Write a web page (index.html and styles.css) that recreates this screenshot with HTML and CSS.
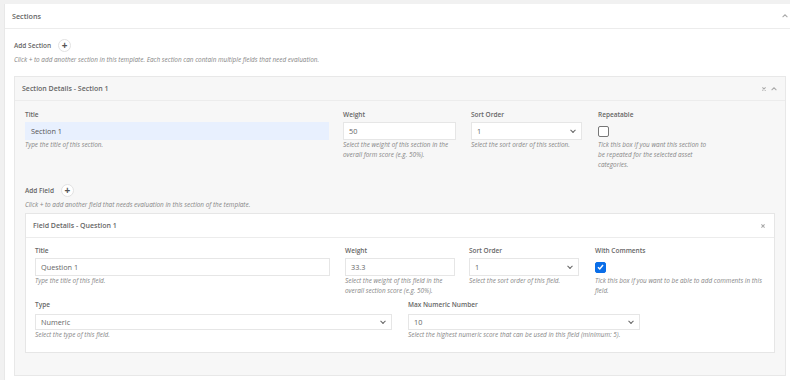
FILE: index.html
```html
<!doctype html>
<html lang="en">
<head>
<meta charset="utf-8">
<title>Sections</title>
<link rel="stylesheet" href="styles.css">
</head>
<body>

<div class="card">
	<div class="card-head">
		<span>Sections</span>
		<span class="tools">
			<svg class="ico" viewBox="0 0 10 10"><path d="M2 6.5 5 3.5 8 6.5" /></svg>
		</span>
	</div>

	<div class="card-body">

		<div class="add-row">
			<span class="add-label">Add Section</span>
			<span class="add-btn">+</span>
		</div>
		<p class="help">Click + to add another section in this template. Each section can contain multiple fields that need evaluation.</p>

		<!-- section panel -->
		<div class="panel">
			<div class="panel-head">
				<span>Section Details - Section 1</span>
				<span class="tools">
					<svg class="ico" viewBox="0 0 10 10"><path d="M3 3 7 7 M7 3 3 7" /></svg>
					<svg class="ico" viewBox="0 0 10 10"><path d="M2 6.5 5 3.5 8 6.5" /></svg>
				</span>
			</div>

			<div class="panel-body">
				<div class="row sec-row">
					<div class="col">
						<label>Title</label>
						<div class="input filled">Section 1</div>
						<p class="help">Type the title of this section.</p>
					</div>
					<div class="col">
						<label>Weight</label>
						<div class="input">50</div>
						<p class="help">Select the weight of this section in the overall form score (e.g. 50%).</p>
					</div>
					<div class="col">
						<label>Sort Order</label>
						<div class="input select">1</div>
						<p class="help">Select the sort order of this section.</p>
					</div>
					<div class="col">
						<label>Repeatable</label>
						<div class="check-wrap"><span class="check"></span></div>
						<p class="help">Tick this box if you want this section to be repeated for the selected asset categories.</p>
					</div>
				</div>

				<div class="add-row field-add">
					<span class="add-label">Add Field</span>
					<span class="add-btn">+</span>
				</div>
				<p class="help">Click + to add another field that needs evaluation in this section of the template.</p>

				<!-- field card -->
				<div class="field">
					<div class="field-head">
						<span>Field Details - Question 1</span>
						<span class="tools">
							<svg class="ico" viewBox="0 0 10 10"><path d="M3 3 7 7 M7 3 3 7" /></svg>
						</span>
					</div>
					<div class="field-body">
						<div class="row fld-row">
							<div class="col">
								<label>Title</label>
								<div class="input">Question 1</div>
								<p class="help">Type the title of this field.</p>
							</div>
							<div class="col">
								<label>Weight</label>
								<div class="input">33.3</div>
								<p class="help">Select the weight of this field in the overall section score (e.g. 50%).</p>
							</div>
							<div class="col">
								<label>Sort Order</label>
								<div class="input select">1</div>
								<p class="help">Select the sort order of this field.</p>
							</div>
							<div class="col">
								<label>With Comments</label>
								<div class="check-wrap"><span class="check on">
									<svg viewBox="0 0 10 10"><path d="M2.2 5.2 4.2 7.2 7.8 2.8" /></svg>
								</span></div>
								<p class="help">Tick this box if you want to be able to add comments in this field.</p>
							</div>
						</div>

						<div class="row type-row">
							<div class="col">
								<label>Type</label>
								<div class="input select short">Numeric</div>
								<p class="help">Select the type of this field.</p>
							</div>
							<div class="col">
								<label>Max Numeric Number</label>
								<div class="input select short">10</div>
								<p class="help">Select the highest numeric score that can be used in this field (minimum: 5).</p>
							</div>
						</div>
					</div>
				</div>

			</div>
		</div>

	</div>
</div>

</body>
</html>
```

FILE: styles.css
```css
body {
	margin:0;
	background:#f1f1f1;
	font-family:"Open Sans", "Liberation Sans", sans-serif;
	color:#5a5a5a;
}
p {margin:0;}

/* outer card */
.card {
	margin:4px 0 0 4px;
	background:#fff;
	border-left:1px solid #e8e8e8;
	min-height:380px;
}
.card-head {
	display:flex;
	align-items:center;
	justify-content:space-between;
	height:24px;
	padding:0 1px 0 7px;
	border-bottom:1px solid #ececec;
	font-size:7.2px;
	font-weight:600;
	color:#666;
}
.card-body {padding:9px 4px 0 9px;}

.tools {display:flex; gap:2px; align-items:center;}
.ico {width:8px; height:8px; fill:none; stroke:#aaa; stroke-width:1.3;}

/* add buttons */
.add-row {display:flex; align-items:center; gap:7px; height:14px;}
.add-label {font-size:6.5px; font-weight:600; color:#666;}
.add-btn {
	display:flex; align-items:center; justify-content:center;
	width:13px; height:13px;
	border:1px solid #e2e2e2;
	border-radius:50%;
	background:#fff;
	font-size:10px; font-weight:700; line-height:1;
	color:#555;
	box-sizing:border-box;
}

.help {
	font-size:6.4px;
	font-style:italic;
	color:#858585;
	line-height:10px;
}
.card-body > .help {margin-top:3px;}

/* section panel */
.panel {
	margin-top:11px;
	background:#f7f7f7;
	border:1px solid #e8e8e8;
}
.panel-head {
	display:flex;
	align-items:center;
	justify-content:space-between;
	height:23px;
	padding:0 7px 0 7px;
	border-bottom:1px solid #ececec;
	font-size:7px;
	font-weight:600;
	color:#666;
}
.panel-body {padding:9px 10px 22px;}

.row {display:grid;}
.sec-row {grid-template-columns:304px 113px 112px 112px; column-gap:14px;}
.sec-row .col:nth-child(3) {margin-left:1px;}
.sec-row .col:nth-child(4) {margin-left:2px;}

label {
	display:block;
	font-size:6.5px;
	font-weight:600;
	color:#666;
	line-height:10px;
	margin-bottom:2px;
}

.input {
	position:relative;
	height:18px;
	box-sizing:border-box;
	padding:0 5px;
	border:1px solid #e6e6e6;
	background:#fff;
	font-size:7.3px;
	line-height:16px;
	color:#666;
}
.input.filled {background:#e8f0fe; border-color:#e8f0fe; color:#555;}
.input.short {height:16px; line-height:14px;}
.select::after {
	content:"";
	position:absolute;
	right:6px; top:50%;
	width:3px; height:3px;
	border-right:1px solid #666;
	border-bottom:1px solid #666;
	transform:translateY(-70%) rotate(45deg);
}

.check-wrap {height:18px; display:flex; align-items:center;}
.check {
	display:flex; align-items:center; justify-content:center;
	width:11px; height:11px;
	box-sizing:border-box;
	border:1px solid #777;
	border-radius:2px;
	background:#fff;
}
.check.on {background:#0a6ee8; border-color:#0a6ee8;}
.check svg {width:10px; height:10px; fill:none; stroke:#fff; stroke-width:1.6;}

.field-add {margin-top:13px;}
.panel-body > .help {margin-top:3px;}

/* field card */
.field {
	margin-top:3px;
	background:#fff;
	border:1px solid #e6e6e6;
}
.field-head {
	display:flex;
	align-items:center;
	justify-content:space-between;
	height:23px;
	padding:0 7px 0 7px;
	border-bottom:1px solid #ececec;
	font-size:7px;
	font-weight:600;
	color:#666;
}
.field-body {padding:8px 9px 12px;}
.fld-row {grid-template-columns:295px 110px 109px 170px; column-gap:15px;}
.fld-row .col:nth-child(3) {margin-left:-1px;}
.fld-row .col:nth-child(4) {margin-left:1px;}
.type-row {grid-template-columns:357px 232px; column-gap:16px; margin-top:4px;}
.type-row label {margin-bottom:4px;}
```
